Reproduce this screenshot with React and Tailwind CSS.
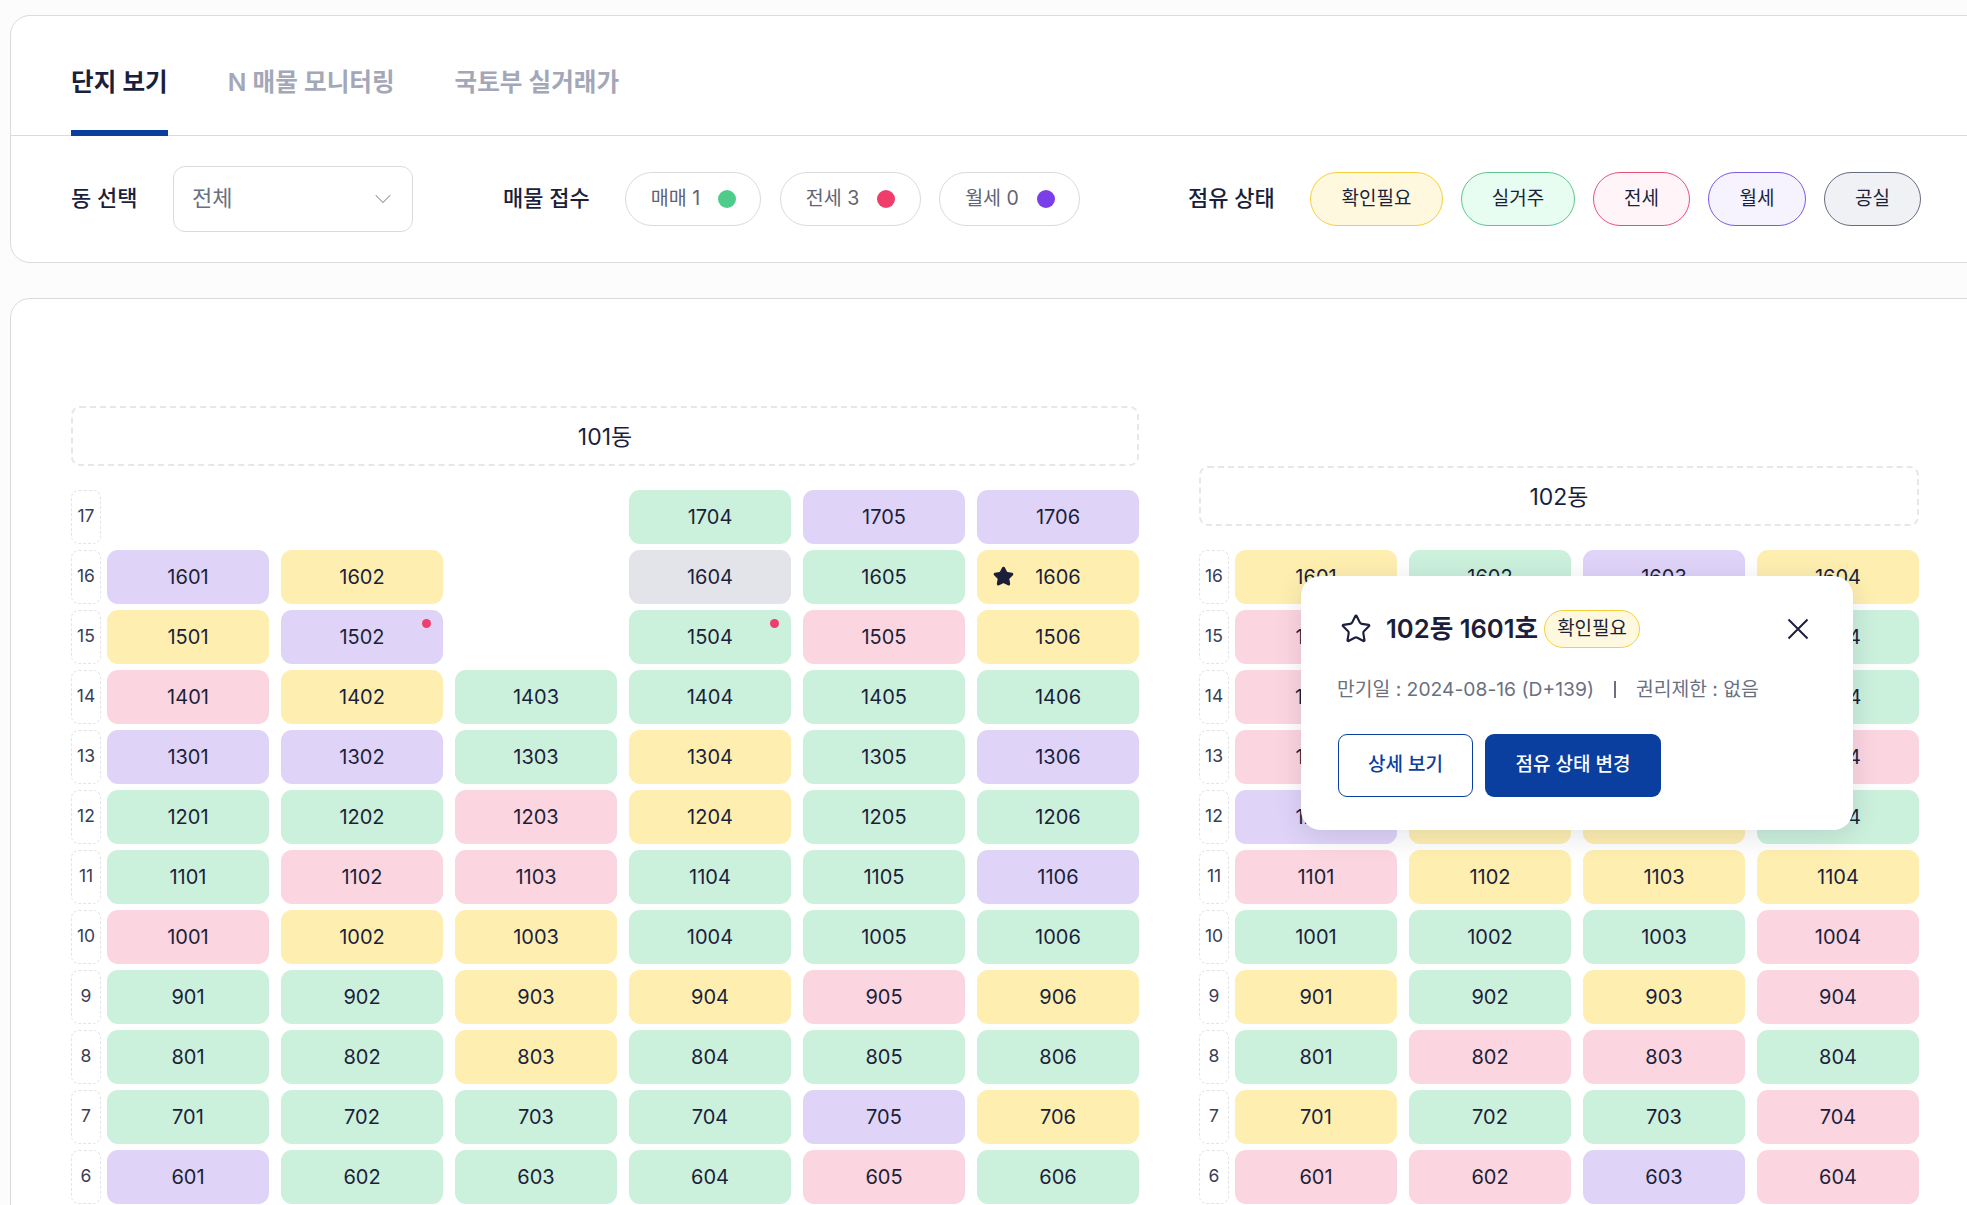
import { ChevronDown, Star } from "lucide-react";

const G = "bg-[#cbf0dc]";
const P = "bg-[#dfd3f8]";
const Y = "bg-[#feeeb0]";
const R = "bg-[#fbd5e0]";
const N = "bg-[#e2e4e9]";

const dong101 = [
  [17, [null, null, null, [1704, G], [1705, P], [1706, P]]],
  [16, [[1601, P], [1602, Y], null, [1604, N], [1605, G], [1606, Y, "star"]]],
  [15, [[1501, Y], [1502, P, "dot"], null, [1504, G, "dot"], [1505, R], [1506, Y]]],
  [14, [[1401, R], [1402, Y], [1403, G], [1404, G], [1405, G], [1406, G]]],
  [13, [[1301, P], [1302, P], [1303, G], [1304, Y], [1305, G], [1306, P]]],
  [12, [[1201, G], [1202, G], [1203, R], [1204, Y], [1205, G], [1206, G]]],
  [11, [[1101, G], [1102, R], [1103, R], [1104, G], [1105, G], [1106, P]]],
  [10, [[1001, R], [1002, Y], [1003, Y], [1004, G], [1005, G], [1006, G]]],
  [9, [[901, G], [902, G], [903, Y], [904, Y], [905, R], [906, Y]]],
  [8, [[801, G], [802, G], [803, Y], [804, G], [805, G], [806, G]]],
  [7, [[701, G], [702, G], [703, G], [704, G], [705, P], [706, Y]]],
  [6, [[601, P], [602, G], [603, G], [604, G], [605, R], [606, G]]],
];

const dong102 = [
  [16, [[1601, Y], [1602, G], [1603, P], [1604, Y]]],
  [15, [[1501, R], [1502, G], [1503, G], [1504, G]]],
  [14, [[1401, R], [1402, G], [1403, G], [1404, G]]],
  [13, [[1301, R], [1302, G], [1303, G], [1304, R]]],
  [12, [[1201, P], [1202, Y], [1203, Y], [1204, G]]],
  [11, [[1101, R], [1102, Y], [1103, Y], [1104, Y]]],
  [10, [[1001, G], [1002, G], [1003, G], [1004, R]]],
  [9, [[901, Y], [902, G], [903, Y], [904, R]]],
  [8, [[801, G], [802, R], [803, R], [804, G]]],
  [7, [[701, Y], [702, G], [703, G], [704, R]]],
  [6, [[601, R], [602, R], [603, P], [604, R]]],
];

const Cell = ({ unit }) => {
  if (!unit) return <div />;
  const [no, color, mark] = unit;
  return (
    <div className={`relative h-[54px] rounded-[11px] flex items-center justify-center text-[20px] ${color}`}>
      {mark === "star" && (
        <Star size={21} fill="currentColor" strokeWidth={2.5} className="absolute left-[16px] top-[16px]" />
      )}
      {no}
      {mark === "dot" && <span className="absolute top-[9px] right-[12px] w-[9px] h-[9px] rounded-full bg-[#f03e6c]" />}
    </div>
  );
};

const Row = ({ floor, units, cols }) => (
  <div className="flex gap-[6px]">
    <div className="w-[30px] h-[54px] shrink-0 rounded-[8px] border border-dashed border-[#e2e4e8] flex items-center justify-center pb-px text-[17.5px] text-[#3a3f55]">
      {floor}
    </div>
    <div className={`grid gap-x-[12px] ${cols}`}>
      {units.map((u, i) => (
        <Cell key={i} unit={u} />
      ))}
    </div>
  </div>
);

const Dong = ({ name, rows, cols }) => (
  <div className="flex flex-col">
    <div className="h-[60px] mb-[24px] pt-[2px] rounded-[9px] border-2 border-dashed border-[#e5e7eb] flex items-center justify-center text-[23px]">
      {name}
    </div>
    <div className="flex flex-col gap-[6px]">
      {rows.map(([floor, units]) => (
        <Row key={floor} floor={floor} units={units} cols={cols} />
      ))}
    </div>
  </div>
);

const Receipt = ({ label, dot, width }) => (
  <div className={`h-[54px] rounded-full border border-[#d9dbe0] bg-white flex items-center justify-center gap-[18px] pl-px pt-px text-[19.5px] text-[#5f6475] ${width}`}>
    {label}
    <span className={`w-[18px] h-[18px] rounded-full ${dot}`} />
  </div>
);

const Status = ({ label, className }) => (
  <div className={`h-[54px] rounded-full border flex items-center justify-center pt-px text-[19px] ${className}`}>
    {label}
  </div>
);

export default function App() {
  return (
    <div className="h-screen overflow-hidden bg-[#fcfcfd] pt-[15px] pl-[10px] font-['Inter','Noto_Sans_CJK_KR',sans-serif] text-[#1b1f3b]">
      <div className="-mr-[30px] h-[248px] bg-white border border-[#d9dbe0] rounded-[20px]">
        <div className="flex gap-[60px] h-[120px] px-[60px] border-b border-[#d9dbe0]">
          <div className="relative flex items-center pt-[14px] text-[24.6px] font-semibold">
            단지 보기
            <span className="absolute left-0 right-0 -bottom-px h-[6px] bg-[#0a3fa0]" />
          </div>
          <div className="flex items-center pt-[14px] text-[24.6px] font-semibold text-[#a3a7b8]">N 매물 모니터링</div>
          <div className="flex items-center pt-[14px] text-[24.6px] font-semibold text-[#a3a7b8]">국토부 실거래가</div>
        </div>
        <div className="flex items-center h-[126px] pb-px pl-[60px]">
          <span className="text-[22px] font-medium w-[102px]">동 선택</span>
          <div className="w-[240px] h-[66px] rounded-[12px] border border-[#d9dbe0] flex items-center justify-between pl-[18px] pr-[15px] text-[22px] text-[#6b7080]">
            전체
            <ChevronDown size={28} strokeWidth={0.9} className="text-[#8b8fa0]" />
          </div>
          <span className="ml-[90px] w-[122px] text-[22px] font-medium">매물 접수</span>
          <div className="flex gap-[18.5px]">
            <Receipt label="매매 1" dot="bg-[#4fcb8a]" width="w-[136px]" />
            <Receipt label="전세 3" dot="bg-[#f03e6c]" width="w-[141px]" />
            <Receipt label="월세 0" dot="bg-[#7a3fe8]" width="w-[141px]" />
          </div>
          <span className="ml-[108px] w-[122px] text-[22px] font-medium">점유 상태</span>
          <div className="flex gap-[18px]">
            <Status label="확인필요" className="w-[133px] bg-[#fef8de] border-[#f6cf3f]" />
            <Status label="실거주" className="w-[114px] bg-[#e8fdf1] border-[#5cc78d]" />
            <Status label="전세" className="w-[97px] bg-[#fff5f8] border-[#e4527a]" />
            <Status label="월세" className="w-[98px] bg-[#f6f3ff] border-[#7a5ae0]" />
            <Status label="공실" className="w-[97px] bg-[#f0f1f4] border-[#686c7e]" />
          </div>
        </div>
      </div>

      <div className="-mr-[30px] mt-[35px] bg-white border border-[#d9dbe0] rounded-[20px] pt-[107px] pl-[60px] pb-[60px]">
        <div className="flex items-end gap-[60px]">
          <Dong name="101동" rows={dong101} cols="grid-cols-[repeat(6,162px)]" />
          <div className="relative">
            <Dong name="102동" rows={dong102} cols="grid-cols-[repeat(4,162px)]" />
            <div className="absolute left-[102px] top-[110px] w-[552px] h-[254px] bg-white rounded-[20px] shadow-[0_6px_28px_rgba(27,31,59,0.12)] pt-[34px] px-[36px]">
              <div className="relative flex items-center h-[38px]">
                <Star size={32} strokeWidth={1.6} className="shrink-0 ml-[3px] mr-[14px]" />
                <span className="text-[25.6px] font-semibold mr-[6px]">102동 1601호</span>
                <span className="h-[38px] w-[96px] rounded-full border border-[#f6cf3f] bg-[#fef8de] flex items-center justify-center text-[19px]">
                  확인필요
                </span>
                <svg width="22" height="22" viewBox="0 0 22 22" fill="none" stroke="currentColor" strokeWidth="2" className="absolute left-[450px] top-[8px]">
                  <path d="M1.5 1.5L20.5 20.5M20.5 1.5L1.5 20.5" />
                </svg>
              </div>
              <div className="flex items-center mt-[27px] text-[19.3px] text-[#6b7080]">
                <span>만기일 : 2024-08-16 (D+139)</span>
                <span className="w-[2px] h-[17px] bg-[#6b7080] mx-[20px]" />
                <span>권리제한 : 없음</span>
              </div>
              <div className="flex gap-[12px] mt-[30px] ml-px">
                <button className="w-[135px] h-[63px] rounded-[9px] border border-[#0a3fa0] text-[#0a3fa0] text-[19px] font-medium">
                  상세 보기
                </button>
                <button className="w-[176px] h-[63px] rounded-[9px] bg-[#0a3fa0] text-white text-[19px] font-medium">
                  점유 상태 변경
                </button>
              </div>
            </div>
          </div>
        </div>
      </div>
    </div>
  );
}
